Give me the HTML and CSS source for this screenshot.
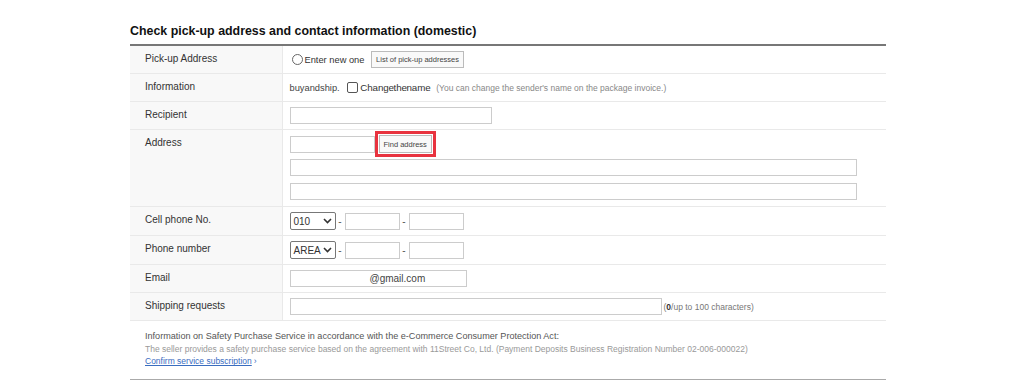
FILE: index.html
```html
<!DOCTYPE html>
<html lang="en">
<head>
  <meta charset="UTF-8">
  <link rel="stylesheet" href="styles.css">
</head>
<body>
  <div class="wrap">
    <h3 class="title">Check pick-up address and contact information (domestic)</h3>
    <table class="form-table">
      <tr>
        <th>Pick-up Address</th>
        <td>
          <label class="radio"><span class="radio-dot"></span>Enter new one</label>
          <button class="btn-small">List of pick-up addresses</button>
        </td>
      </tr>
      <tr>
        <th>Information</th>
        <td>
          <span class="sender">buyandship.</span>
          <label class="check"><span class="check-box"></span><span class="tight">Change the name</span></label>
          <span class="note">(You can change the sender's name on the package invoice.)</span>
        </td>
      </tr>
      <tr>
        <th>Recipient</th>
        <td><input class="inp w-202" type="text"></td>
      </tr>
      <tr>
        <th>Address</th>
        <td class="addr">
          <div class="addr-line">
            <input class="inp w-86" type="text">
            <span class="highlight"><button class="btn-small">Find address</button></span>
          </div>
          <input class="inp w-full first" type="text">
          <input class="inp w-full" type="text">
        </td>
      </tr>
      <tr>
        <th>Cell phone No.</th>
        <td>
          <div class="phone">
            <span class="sel">010<svg width="9" height="6" viewBox="0 0 9 6"><path d="M1 1l3.5 3.5L8 1" fill="none" stroke="#333" stroke-width="1.6"/></svg></span>
            <span class="dash">-</span>
            <input class="inp w-55" type="text">
            <span class="dash">-</span>
            <input class="inp w-55" type="text">
          </div>
        </td>
      </tr>
      <tr>
        <th>Phone number</th>
        <td>
          <div class="phone">
            <span class="sel">AREA<svg width="9" height="6" viewBox="0 0 9 6"><path d="M1 1l3.5 3.5L8 1" fill="none" stroke="#333" stroke-width="1.6"/></svg></span>
            <span class="dash">-</span>
            <input class="inp w-55" type="text">
            <span class="dash">-</span>
            <input class="inp w-55" type="text">
          </div>
        </td>
      </tr>
      <tr>
        <th>Email</th>
        <td><div class="inp w-177 email">@gmail.com</div></td>
      </tr>
      <tr>
        <th>Shipping requests</th>
        <td>
          <div class="ship">
            <input class="inp w-372" type="text">
            <span class="count">(<b>0</b>/up to 100 characters)</span>
          </div>
        </td>
      </tr>
    </table>
    <div class="safety">
      <p class="safety-head">Information on Safety Purchase Service in accordance with the e-Commerce Consumer Protection Act:</p>
      <p class="safety-text">The seller provides a safety purchase service based on the agreement with 11Street Co, Ltd. (Payment Deposits Business Registration Number 02-006-000022)</p>
      <a class="safety-link" href="#">Confirm service subscription</a><span class="arrow">&rsaquo;</span>
    </div>
  </div>
</body>
</html>
```

FILE: styles.css
```css
* {
  margin: 0;
  padding: 0;
  box-sizing: border-box;
}

body {
  background: #fff;
  font-family: "Liberation Sans", Arial, sans-serif;
  color: #333;
}

.wrap {
  width: 756px;
  margin-left: 130px;
  padding-top: 23px;
}

.title {
  font-size: 12.4px;
  font-weight: bold;
  color: #111;
  line-height: 16px;
  margin-bottom: 5px;
}

/* フォームテーブル */
.form-table {
  width: 100%;
  border-collapse: collapse;
  border-top: 2px solid #777;
}

.form-table tr {
  border-bottom: 1px solid #e9e9e9;
}

.form-table th {
  width: 152px;
  background: #f8f8f8;
  border-right: 1px solid #e9e9e9;
  text-align: left;
  vertical-align: top;
  font-weight: normal;
  font-size: 10px;
  color: #333;
  padding: 7px 0 0 15px;
  height: 28px;
}

.form-table td {
  padding: 5px 8px 5px 7px;
  font-size: 9.3px;
  height: 28px;
  vertical-align: middle;
}

.inp {
  display: block;
  height: 17px;
  border: 1px solid #ccc;
  background: #fff;
}

.w-202 { width: 202px; }
.w-86 { width: 85px; }
.w-55 { width: 55px; }
.w-177 { width: 177px; }
.w-372 { width: 372px; }
.w-full { width: 567px; margin-top: 7px; }
.w-full.first { margin-top: 2px; }

/* ラジオとボタン */
.radio {
  display: inline-flex;
  align-items: center;
  font-size: 9.3px;
  vertical-align: middle;
  margin-left: 2px;
}

.radio-dot {
  width: 11px;
  height: 11px;
  border: 1px solid #666;
  border-radius: 50%;
  margin-right: 2px;
}

.btn-small {
  height: 17px;
  padding: 0 4px;
  border: 1px solid #bbb;
  background: #f9f9f9;
  font-family: "Liberation Sans", Arial, sans-serif;
  font-size: 7.5px;
  color: #444;
  vertical-align: middle;
  margin-left: 4px;
}

.sender {
  font-size: 9.3px;
  color: #444;
  vertical-align: middle;
}

.check {
  display: inline-flex;
  align-items: center;
  font-size: 9.8px;
  vertical-align: middle;
  margin-left: 5px;
}

.check-box {
  width: 11px;
  height: 11px;
  border: 1px solid #555;
  border-radius: 2px;
  margin-right: 2px;
}

.tight {
  word-spacing: -3px;
  letter-spacing: -0.1px;
}

.note {
  font-size: 8.5px;
  color: #888;
  vertical-align: middle;
  margin-left: 3px;
}

/* 住所 */
.form-table td.addr {
  padding-top: 1px;
  padding-bottom: 6px;
  vertical-align: top;
}

.addr-line {
  display: flex;
  align-items: center;
}

.highlight {
  display: inline-flex;
  border: 3px solid #e8333f;
  padding: 1px;
  margin-left: 0;
}

.highlight .btn-small {
  margin-left: 0;
  height: 18px;
  padding: 0 4px;
}

/* 電話番号 */
.phone,
.ship {
  display: flex;
  align-items: center;
}

.sel {
  display: flex;
  align-items: center;
  justify-content: space-between;
  width: 46px;
  height: 18px;
  border: 1px solid #777;
  border-radius: 2px;
  padding: 0 3px 0 3px;
  font-size: 10px;
  color: #333;
}

.dash {
  width: 9px;
  text-align: center;
  font-size: 10px;
  color: #555;
}

.email {
  font-size: 10px;
  color: #444;
  line-height: 15px;
  padding-left: 79px;
}

.count {
  font-size: 8.5px;
  color: #777;
  margin-left: 2px;
}

.count b {
  color: #333;
}

/* 安全取引サービス */
.safety {
  padding: 9px 15px 11px;
  border-bottom: 1px solid #aaa;
  font-size: 8.5px;
  line-height: 12.7px;
}

.safety-head {
  color: #555;
  font-size: 9.1px;
}

.safety-text {
  color: #999;
}

.safety-link {
  color: #3a6dbf;
  text-decoration: underline;
}

.arrow {
  color: #3a6dbf;
  margin-left: 2px;
}
```
